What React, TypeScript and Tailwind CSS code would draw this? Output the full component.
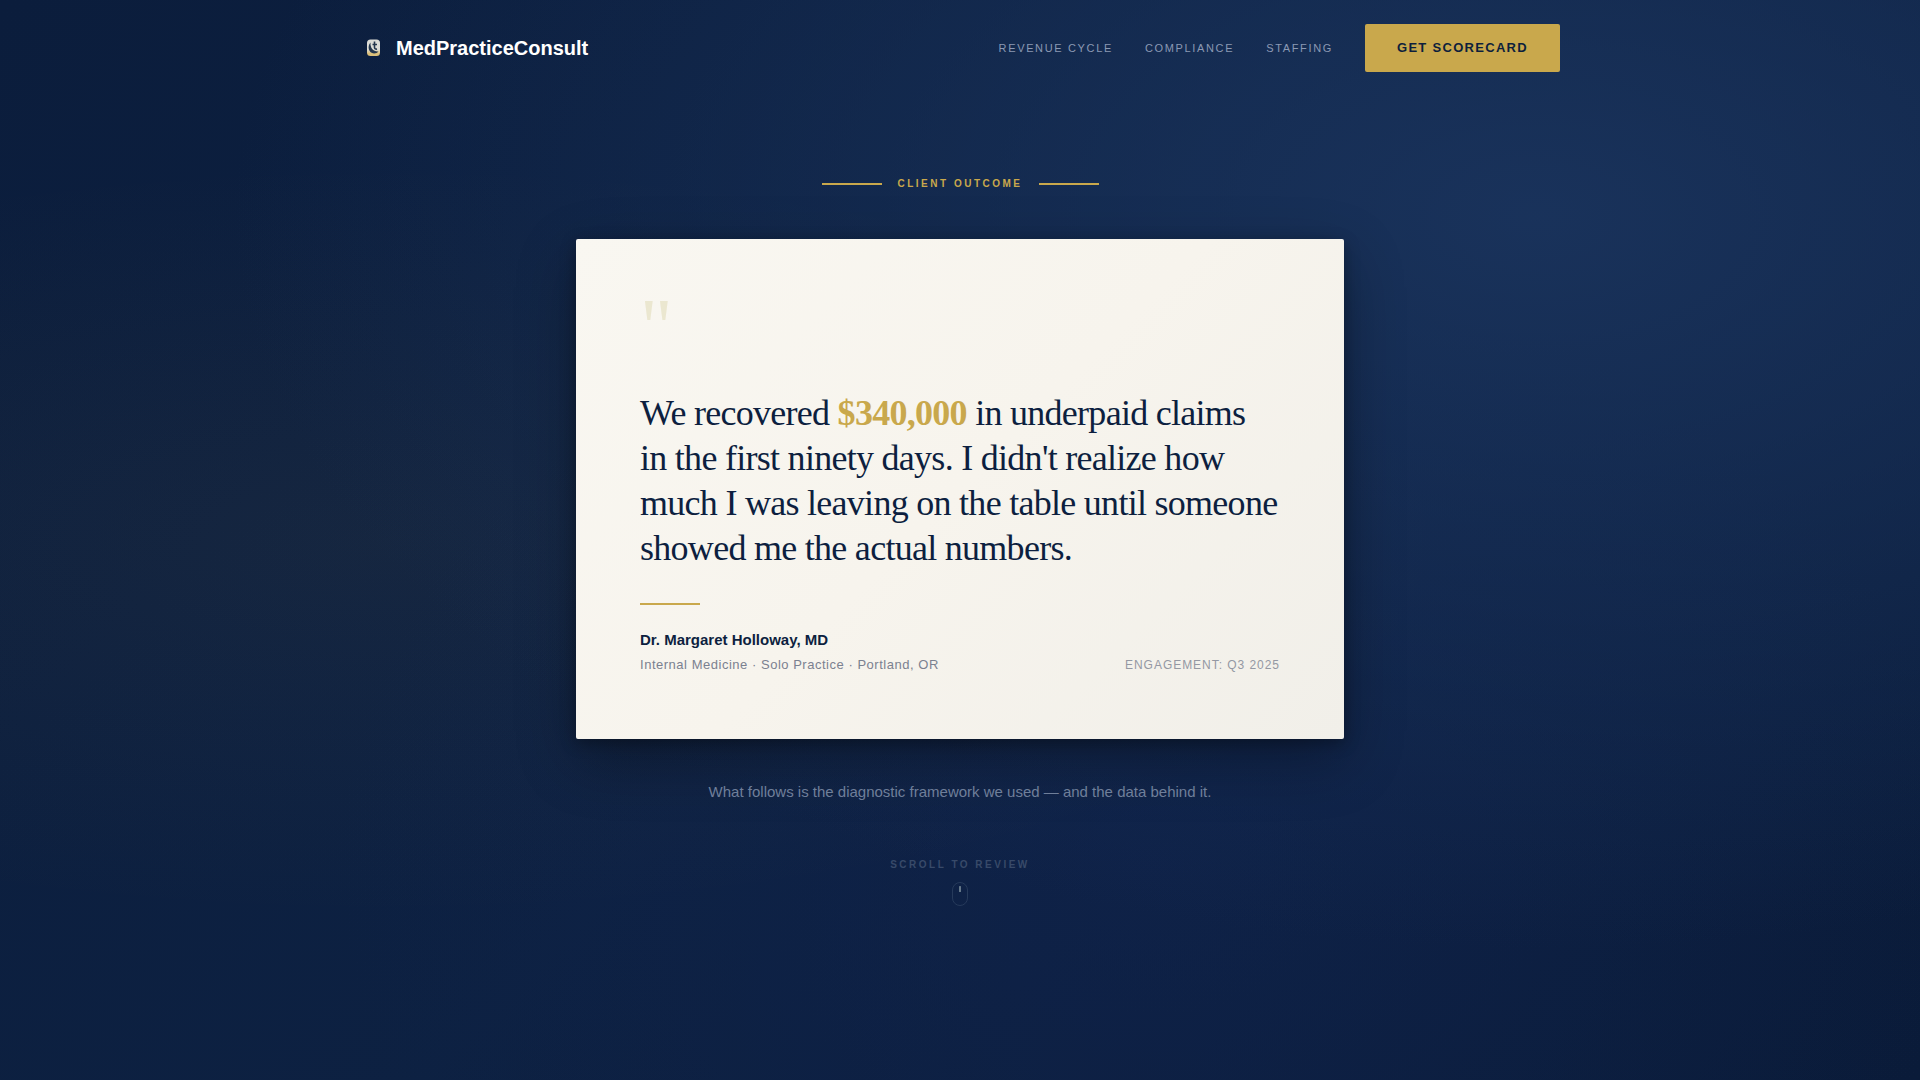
const navLinks = [
    { label: "Revenue Cycle", href: "#revenue-cycle" },
    { label: "Compliance", href: "#compliance" },
    { label: "Staffing", href: "#staffing" },
];

export default function App() {
    return (
        <div className="min-h-screen bg-[radial-gradient(ellipse_at_80%_20%,#1b355fdd_0%,transparent_60%),radial-gradient(ellipse_at_20%_50%,#c9a84c0d_0%,transparent_50%),radial-gradient(ellipse_at_60%_80%,#10234caa_0%,transparent_50%),linear-gradient(135deg,#0b1d3c_0%,#0d2142_50%,#0a1b39_100%)] font-['Liberation_Sans',Arial,sans-serif]">
            <header className="mx-auto flex max-w-7xl items-center justify-between px-10 py-6">
                <a href="#top" className="flex items-center gap-2 text-xl font-bold text-white">
                    <Logo />
                    MedPracticeConsult
                </a>
                <nav className="flex items-center gap-8">
                    {navLinks.map((link) => (
                        <a key={link.href} href={link.href} className="text-[11px] tracking-[0.15em] text-[#8b99b3] uppercase">
                            {link.label}
                        </a>
                    ))}
                    <button type="button" className="h-12 rounded-xs bg-[#c9a84c] px-8 text-[13px] font-bold tracking-widest text-[#0d1f3c] uppercase">
                        Get Scorecard
                    </button>
                </nav>
            </header>

            <main className="mx-auto flex max-w-3xl flex-col items-center pt-20 pb-24">
                <div className="flex items-center gap-4">
                    <span className="h-0.5 w-15 bg-[#c9a84c]" />
                    <h2 className="text-[10px] leading-[15px] font-bold tracking-[0.25em] text-[#c9a84c] uppercase">Client Outcome</h2>
                    <span className="h-0.5 w-15 bg-[#c9a84c]" />
                </div>

                <figure className="mt-12 w-full rounded-xs bg-linear-135 from-[#f9f7f1] via-[#f7f4ed] to-[#f1efe9] p-16 shadow-[0_20px_60px_rgba(0,0,0,0.3),0_4px_16px_rgba(0,0,0,0.3)]">
                    <div aria-hidden="true" className="h-[88px] font-['Liberation_Serif',serif] text-[80px] leading-12 text-[#ebe7d0]">
                        "
                    </div>
                    <blockquote className="font-['Liberation_Serif',serif] text-4xl leading-[45px] tracking-[-0.02em] text-[#0d1f3f]">
                        We recovered <strong className="font-bold text-[#c9a84c]">$340,000</strong> in underpaid claims in the first ninety days. I didn't realize how much I was leaving on the table until someone showed me the actual numbers.
                    </blockquote>
                    <div className="mt-8 h-0.5 w-15 bg-[#c9a84c]" />
                    <figcaption className="mt-6 flex items-end justify-between">
                        <div>
                            <p className="text-[15px] leading-[22px] font-bold text-[#0d1f3f]">Dr. Margaret Holloway, MD</p>
                            <p className="mt-1 text-[13px] leading-5 tracking-[0.04em] text-[#7b8190]">Internal Medicine · Solo Practice · Portland, OR</p>
                        </div>
                        <p className="text-xs leading-5 tracking-[0.08em] text-[#9498a3] uppercase">Engagement: Q3 2025</p>
                    </figcaption>
                </figure>

                <p className="mt-10 text-[15px] leading-[26px] text-[#6f7f9a]">What follows is the diagnostic framework we used — and the data behind it.</p>

                <a href="#framework" className="mt-13 flex flex-col items-center gap-2.5 text-[10px] leading-[15px] font-bold tracking-[0.25em] text-[#384a69] uppercase">
                    Scroll to Review
                    <svg width="16" height="24" viewBox="0 0 16 24" fill="none" aria-hidden="true">
                        <rect x="0.5" y="0.5" width="15" height="23" rx="7.5" stroke="#263a5b" />
                        <rect x="7" y="4" width="2" height="6" rx="0.5" fill="#66798a" />
                    </svg>
                </a>
            </main>
        </div>
    );
}

function Logo() {
    return (
        <svg width="28" height="28" viewBox="0 0 28 28" aria-hidden="true">
            <defs>
                <linearGradient id="tile" x1="0" y1="0" x2="0" y2="1">
                    <stop offset="0.6" stopColor="#dcdcd6" />
                    <stop offset="0.85" stopColor="#dcc07a" />
                </linearGradient>
            </defs>
            <rect x="7" y="5.5" width="13" height="16.5" rx="3.5" fill="url(#tile)" />
            <path d="M10.500 8.500C7 12.500 8.500 19 14 19.500C16 19.500 17.500 18.800 18.500 17.500C13.500 18 10 14 10.500 8.500Z" fill="#24364c" />
            <path d="M14.500 7.500v6q0.300 2 2.500 1.500M12.500 10.500h4.500" fill="none" stroke="#24364c" strokeWidth="1.600" />
        </svg>
    );
}
